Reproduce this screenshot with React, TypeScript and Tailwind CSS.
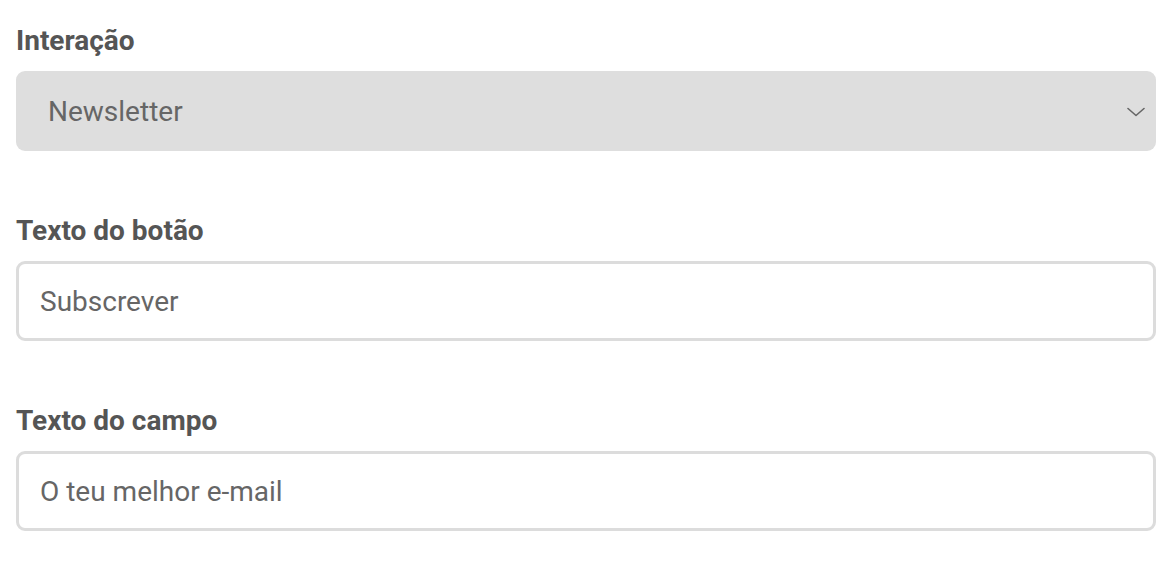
import React from "react";

const font = { fontFamily: "Roboto, 'Liberation Sans', sans-serif" };

function Label({ children }: { children: React.ReactNode }) {
  return (
    <div className="text-[28px] leading-[28px] font-bold text-[#555555] mb-[16px]">
      {children}
    </div>
  );
}

export default function App() {
  return (
    <div className="w-[1174px] h-[570px] bg-white pt-[27px] pl-4 pr-[18px]" style={font}>
      <div className="flex flex-col gap-[66px]">
        <div>
          <Label>Interação</Label>
          <div className="h-[80px] rounded-[9px] bg-[#dedede] flex items-center justify-between pl-[32px] pr-[11px]">
            <span className="text-[28px] leading-none text-[#666666] mt-[2px]">Newsletter</span>
            <svg width="18" height="10" viewBox="0 0 18 10" fill="none" className="mt-[1px]">
              <path d="M1 1.5 L9 8.5 L17 1.5" stroke="#666666" strokeWidth="1.6" strokeLinecap="round" strokeLinejoin="round" />
            </svg>
          </div>
        </div>
        <div>
          <Label>Texto do botão</Label>
          <div className="h-[80px] rounded-[9px] border-[3px] border-[#dcdcdc] bg-white flex items-center pl-[21px]">
            <span className="text-[28px] leading-none text-[#666666] mt-[2px]">Subscrever</span>
          </div>
        </div>
        <div>
          <Label>Texto do campo</Label>
          <div className="h-[80px] rounded-[9px] border-[3px] border-[#dcdcdc] bg-white flex items-center pl-[21px]">
            <span className="text-[28px] leading-none text-[#666666] mt-[2px]">O teu melhor e-mail</span>
          </div>
        </div>
      </div>
    </div>
  );
}
